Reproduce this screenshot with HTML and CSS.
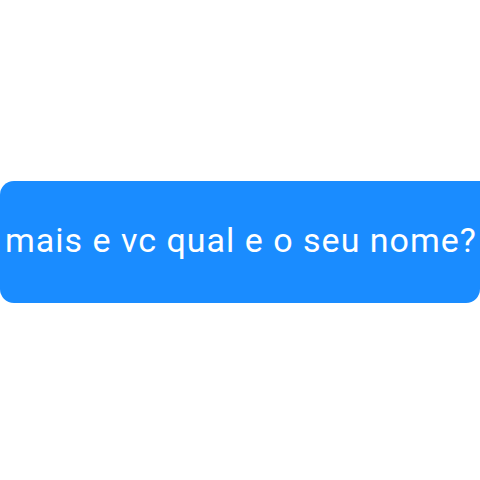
FILE: index.html
```html
<!DOCTYPE html>
<html>
<head>
<meta charset="utf-8">
<link rel="stylesheet" href="styles.css">
</head>
<body>
<div class="stage">
  <div class="bubble"><span class="msg">mais e vc qual e o seu nome?</span></div>
</div>
</body>
</html>
```

FILE: styles.css
```css
html, body {
  margin: 0;
  padding: 0;
  background: #ffffff;
}
.stage {
  width: 480px;
  height: 480px;
  padding-top: 181px;
  box-sizing: border-box;
  overflow: hidden;
}
.bubble {
  height: 122px;
  background: #1a8cff;
  border-radius: 14px 0 14px 14px;
  display: flex;
  align-items: center;
  padding-left: 5px;
  box-sizing: border-box;
}
.msg {
  font-family: Roboto, "Noto Sans", sans-serif;
  font-size: 34px;
  letter-spacing: 1px;
  color: #ffffff;
  white-space: nowrap;
  margin-top: -4px;
}
```
